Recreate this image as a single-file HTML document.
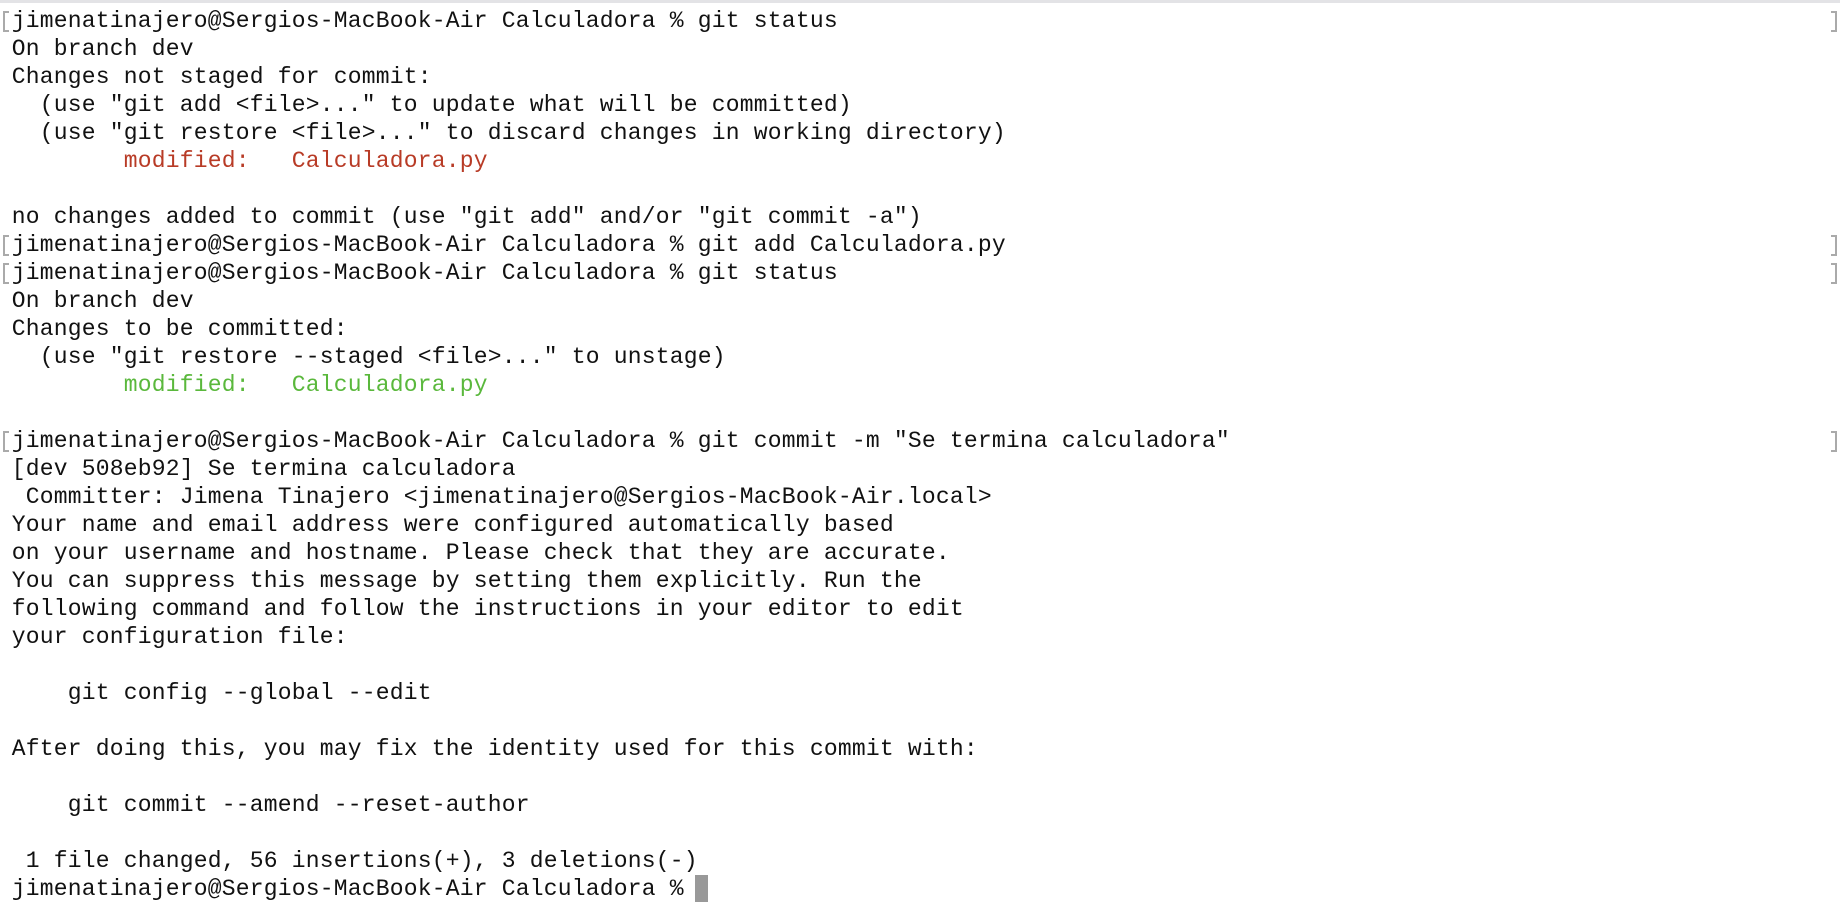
<!DOCTYPE html>
<html><head><meta charset="utf-8"><style>
html,body{margin:0;padding:0;background:#fff;width:1840px;height:914px;overflow:hidden}
.top{position:absolute;left:0;top:0;width:1840px;height:3px;background:#e3e3e6}
pre{position:absolute;left:11.7px;top:7px;margin:0;font-family:"Liberation Mono",monospace;font-size:23px;letter-spacing:0.2px;line-height:28px;color:#111}
.r{color:#b83b26}.g{color:#5ab83c}
.lb,.rb{position:absolute;width:4px;height:17px;border:2px solid #aaa}
.lb{left:3px;border-right:none}
.rb{left:1831px;border-left:none}
.cur{position:absolute;left:695px;top:875px;width:13px;height:27px;background:#999}
</style></head><body>
<div class="top"></div>
<div class="lb" style="top:11px"></div><div class="rb" style="top:11px"></div>
<div class="lb" style="top:235px"></div><div class="rb" style="top:235px"></div>
<div class="lb" style="top:263px"></div><div class="rb" style="top:263px"></div>
<div class="lb" style="top:431px"></div><div class="rb" style="top:431px"></div>
<pre>jimenatinajero@Sergios-MacBook-Air Calculadora % git status
On branch dev
Changes not staged for commit:
  (use "git add &lt;file&gt;..." to update what will be committed)
  (use "git restore &lt;file&gt;..." to discard changes in working directory)
        <span class="r">modified:   Calculadora.py</span>

no changes added to commit (use "git add" and/or "git commit -a")
jimenatinajero@Sergios-MacBook-Air Calculadora % git add Calculadora.py
jimenatinajero@Sergios-MacBook-Air Calculadora % git status
On branch dev
Changes to be committed:
  (use "git restore --staged &lt;file&gt;..." to unstage)
        <span class="g">modified:   Calculadora.py</span>

jimenatinajero@Sergios-MacBook-Air Calculadora % git commit -m "Se termina calculadora"
[dev 508eb92] Se termina calculadora
 Committer: Jimena Tinajero &lt;jimenatinajero@Sergios-MacBook-Air.local&gt;
Your name and email address were configured automatically based
on your username and hostname. Please check that they are accurate.
You can suppress this message by setting them explicitly. Run the
following command and follow the instructions in your editor to edit
your configuration file:

    git config --global --edit

After doing this, you may fix the identity used for this commit with:

    git commit --amend --reset-author

 1 file changed, 56 insertions(+), 3 deletions(-)
jimenatinajero@Sergios-MacBook-Air Calculadora % </pre>
<div class="cur"></div>
</body></html>
